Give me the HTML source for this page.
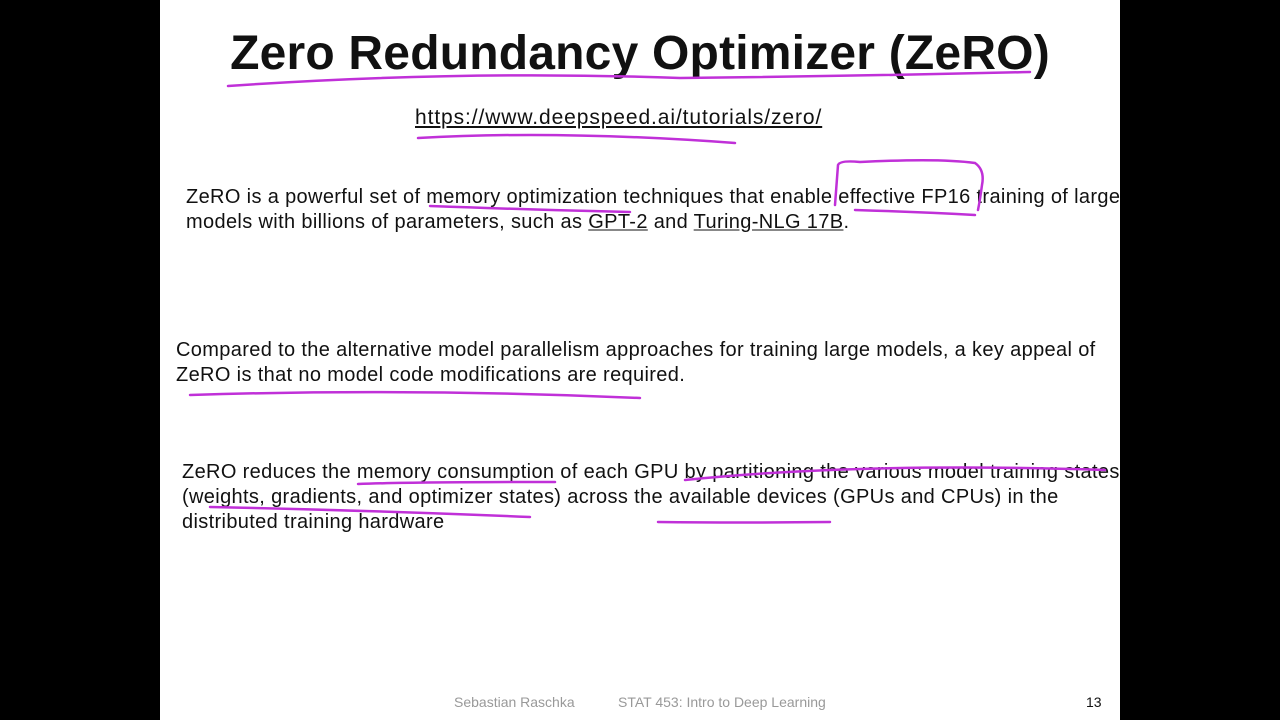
<!DOCTYPE html>
<html><head><meta charset="utf-8"><style>
body{margin:0;width:1280px;height:720px;background:#000;position:relative;overflow:hidden;font-family:"Liberation Sans",sans-serif}
#s{position:absolute;left:160px;top:0;width:960px;height:720px;background:#fff;overflow:hidden}
.t{position:absolute;white-space:nowrap;color:#111}
h1{position:absolute;left:0;width:960px;text-align:center;top:26px;margin:0;font-size:48px;font-weight:bold;color:#111;letter-spacing:0.2px}
.p{font-size:20px;line-height:25px;letter-spacing:0.35px}
u{text-decoration-color:#888}
</style></head><body>
<div id="s">
<h1>Zero Redundancy Optimizer (ZeRO)</h1>
<div class="t" style="left:255px;top:106px;font-size:21px;letter-spacing:0.9px"><u style="text-decoration-color:#111">https://www.deepspeed.ai/tutorials/zero/</u></div>
<div class="t p" style="left:26px;top:185px">ZeRO is a powerful set of memory optimization techniques that enable effective FP16 training of large<br>models with billions of parameters, such as <u>GPT-2</u> and <u>Turing-NLG 17B</u>.</div>
<div class="t p" style="left:16px;top:338px">Compared to the alternative model parallelism approaches for training large models, a key appeal of<br>ZeRO is that no model code modifications are required.</div>
<div class="t p" style="left:22px;top:460px">ZeRO reduces the memory consumption of each GPU by partitioning the various model training states<br>(weights, gradients, and optimizer states) across the available devices (GPUs and CPUs) in the<br>distributed training hardware</div>
<div class="t" style="left:294px;top:694px;font-size:14px;color:#999">Sebastian Raschka</div>
<div class="t" style="left:458px;top:694px;font-size:14px;color:#999">STAT 453: Intro to Deep Learning</div>
<div class="t" style="left:926px;top:694px;font-size:14px;color:#111">13</div>
<svg width="960" height="720" style="position:absolute;left:0;top:0" fill="none" stroke="#c030d8" stroke-width="2.5" stroke-linecap="round">
<path d="M68 86 Q300 70 520 78 Q700 76 870 72"/>
<path d="M258 138 Q400 130 575 143"/>
<path d="M270 206 Q380 210 470 212"/>
<path d="M695 210 Q760 212 815 215"/>
<path d="M675 205 L678 165 Q680 160 700 162 Q780 158 815 163 Q825 170 822 185 Q820 200 818 210"/>
<path d="M30 395 Q250 388 480 398"/>
<path d="M198 484 Q250 482 395 482"/>
<path d="M525 480 Q700 462 945 470"/>
<path d="M50 507 Q200 510 370 517"/>
<path d="M498 522 Q580 523 670 522"/>
</svg>
</div>
</body></html>
